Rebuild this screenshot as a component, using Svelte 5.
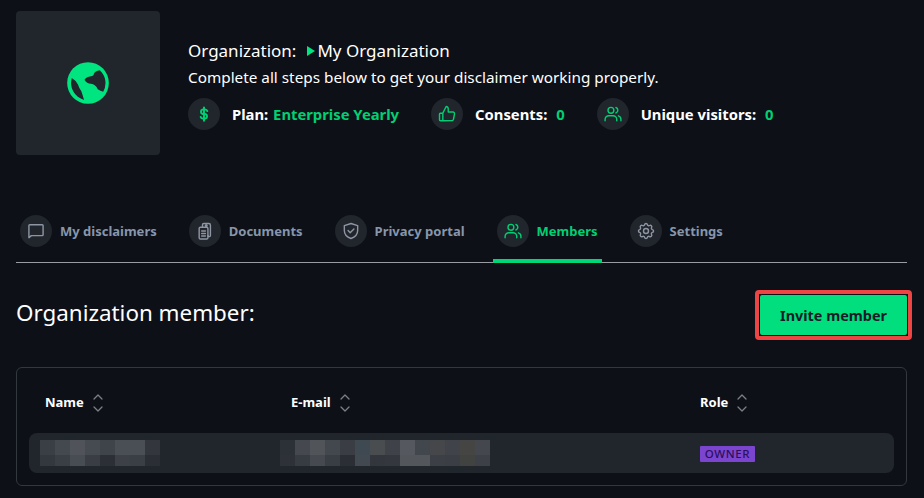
<script>
  const tabs = [
    { label: 'My disclaimers', icon: 'chat' },
    { label: 'Documents', icon: 'docs' },
    { label: 'Privacy portal', icon: 'shield' },
    { label: 'Members', icon: 'people', active: true },
    { label: 'Settings', icon: 'gear' }
  ];
  const nameTop = ['#3a3e45','#44484f','#50535a','#464a51','#3f434a','#4a4e55','#4a4e55','#33363c'];
  const nameBottom = ['#33373e','#3a3e45','#484c53','#3a3d44','#2c2f35','#3d4046','#3a3e45','#2b2e35'];
  const mailTop = ['#2c3037','#45494f','#515458','#43474e','#3a3e44','#3f4952','#4a4d50','#3f4248','#55585f','#42464d','#45474b','#40444a','#454644','#44484e'];
  const mailBottom = ['#2e3238','#373b42','#464a50','#393d44','#2b2e35','#434950','#33373d','#34383e','#53565a','#53565a','#3c4046','#3b3f45','#414341','#3d4147'];
</script>

{#snippet icon(name)}
  <svg class="ico" viewBox="0 0 24 24" fill="none" stroke="currentColor" stroke-width="1.7" stroke-linecap="round" stroke-linejoin="round">
    {#if name === 'chat'}
      <path d="M3.5 20V5.5a1 1 0 0 1 1-1h15a1 1 0 0 1 1 1v11a1 1 0 0 1-1 1H6.5z" />
    {:else if name === 'docs'}
      <rect x="5" y="7.5" width="10.5" height="14" rx="1.5" />
      <path d="M8 12h4.500M8 15h4.500M8 18h4.500" />
      <path d="M9 7.500V4.500a1.500 1.500 0 0 1 1.500-1.500h6a2 2 0 0 1 2 2v12a1.500 1.500 0 0 1-3 .5" />
      <circle cx="13.500" cy="5.500" r="1" />
    {:else if name === 'shield'}
      <path d="M12 3l8 2.500v6c0 5-3.400 8-8 9.500-4.600-1.500-8-4.500-8-9.500v-6z" />
      <path d="M8.500 11.500l2.500 2.500 4.500-4.500" />
    {:else if name === 'people'}
      <circle cx="9.500" cy="7.500" r="3.500" />
      <path d="M2.500 20v-1.500a4.500 4.500 0 0 1 4.500-4.500h5a4.500 4.500 0 0 1 4.500 4.500V20" />
      <path d="M15.500 4.200a3.500 3.500 0 0 1 0 6.600M18.500 14.200a4.500 4.500 0 0 1 3 4.300V20" />
    {:else if name === 'gear'}
      <circle cx="12" cy="12" r="3" />
      <path d="M10.300 4.300c.4-1.800 3-1.800 3.400 0a1.700 1.700 0 0 0 2.600 1.100c1.500-.9 3.300.9 2.400 2.400a1.700 1.700 0 0 0 1 2.500c1.800.4 1.800 3 0 3.400a1.700 1.700 0 0 0-1 2.600c.9 1.500-.9 3.300-2.400 2.400a1.700 1.700 0 0 0-2.600 1c-.4 1.800-3 1.800-3.400 0a1.700 1.700 0 0 0-2.600-1c-1.500.9-3.300-.9-2.400-2.400a1.700 1.700 0 0 0-1-2.600c-1.800-.4-1.800-3 0-3.400a1.700 1.700 0 0 0 1-2.500c-.9-1.500.9-3.300 2.400-2.400a1.700 1.700 0 0 0 2.600-1.100z" />
    {:else if name === 'thumb'}
      <path d="M7 11v9H4a1 1 0 0 1-1-1v-7a1 1 0 0 1 1-1zM7 11l4-8a3 3 0 0 1 2.500 3v3.500h5.500a2 2 0 0 1 2 2.300l-1.200 6.500a2 2 0 0 1-2 1.700H7" />
    {:else if name === 'dollar'}
      <path stroke-width="2.300" d="M16 8.500A3 3 0 0 0 13.300 6.500h-2.600a2.800 2.800 0 0 0 0 5.500h2.600a2.800 2.800 0 0 1 0 5.500h-2.600A3 3 0 0 1 8 15.500M12 4v16" />
    {/if}
  </svg>
{/snippet}

{#snippet sorter()}
  <svg class="sort" viewBox="0 0 12 20" fill="none" stroke="currentColor" stroke-width="1.300" stroke-linecap="round" stroke-linejoin="round">
    <path d="M2 6L6 2l4 4M2 14l4 4 4-4" />
  </svg>
{/snippet}

<main class="page">
  <header class="head">
    <div class="logo">
      <svg class="globe" viewBox="52 50 123 123">
        <circle cx="113.500" cy="111.500" r="61" fill="#00e57f" />
        <path fill="#21252c" d="M148 74 Q134 76 131 84 Q130 92 122 92 Q108 94 103 102 Q110 114 122 114 Q136 116 142 130 Q150 136 158 137 A51 51 0 0 0 148 74Z" />
        <path fill="#21252c" d="M66 97 Q78 104 84 116 Q88 128 94 136 Q98 148 102 161 A51 51 0 0 1 66 97Z" />
      </svg>
    </div>
    <div class="info">
      <div class="org">
        <span>Organization:</span>
        <span class="tri"></span>
        <span>My Organization</span>
      </div>
      <p class="desc">Complete all steps below to get your disclaimer working properly.</p>
      <div class="stats">
        <div class="stat">
          <span class="circle green">{@render icon('dollar')}</span>
          <span class="stat-text">Plan: <b class="plan">Enterprise Yearly</b></span>
        </div>
        <div class="stat">
          <span class="circle green">{@render icon('thumb')}</span>
          <span class="stat-text">Consents: <b class="val">0</b></span>
        </div>
        <div class="stat">
          <span class="circle green">{@render icon('people')}</span>
          <span class="stat-text">Unique visitors: <b class="val">0</b></span>
        </div>
      </div>
    </div>
  </header>

  <nav class="tabs">
    {#each tabs as t}
      <div class="tab" class:active={t.active}>
        <span class="circle">{@render icon(t.icon)}</span>
        <span>{t.label}</span>
      </div>
    {/each}
  </nav>

  <section class="title-row">
    <h1>Organization member:</h1>
    <div class="highlight"><button>Invite member</button></div>
  </section>

  <section class="table">
    <div class="cols heads">
      <div class="th th-name">Name {@render sorter()}</div>
      <div class="th th-mail">E-mail {@render sorter()}</div>
      <div class="th">Role {@render sorter()}</div>
    </div>
    <div class="cols row">
      <div class="blur b-name">
        {#each nameTop as c}<i style:background={c}></i>{/each}
        {#each nameBottom as c}<i style:background={c}></i>{/each}
      </div>
      <div class="blur b-mail">
        {#each mailTop as c}<i style:background={c}></i>{/each}
        {#each mailBottom as c}<i style:background={c}></i>{/each}
      </div>
      <div class="role"><span class="badge">OWNER</span></div>
    </div>
  </section>
</main>

<style>
  :global(body) {
    margin: 0;
    background: #0d1017;
  }
  .page {
    box-sizing: border-box;
    width: 924px;
    height: 498px;
    padding: 11px 17px 0 16px;
    overflow: hidden;
    font-family: "Noto Sans", "Open Sans", sans-serif;
    color: #fff;
  }
  .head {
    display: flex;
    gap: 28px;
  }
  .logo {
    width: 144px;
    height: 144px;
    flex: none;
    display: flex;
    align-items: center;
    justify-content: center;
    background: #21252c;
    border-radius: 4px;
  }
  .globe {
    width: 42px;
    height: 42px;
  }
  .info {
    padding-top: 28px;
  }
  .org {
    display: flex;
    align-items: center;
    font-size: 17px;
    line-height: 24px;
  }
  .tri {
    width: 0;
    height: 0;
    margin: 0 2px 0 11px;
    border-left: 8px solid #00e57f;
    border-top: 5.500px solid transparent;
    border-bottom: 5.500px solid transparent;
  }
  .desc {
    margin: 4px 0 10px;
    font-size: 15.300px;
    line-height: 20px;
  }
  .stats {
    display: flex;
    gap: 32px;
  }
  .stat {
    display: flex;
    align-items: center;
    gap: 12px;
  }
  .stat-text {
    font-size: 14.800px;
    line-height: 34px;
    font-weight: 700;
  }
  .stat-text b {
    color: #00cf73;
    font-weight: 700;
  }
  .plan {
    margin-left: 1px;
  }
  .val {
    margin-left: 5px;
  }
  .circle {
    width: 32px;
    height: 32px;
    flex: none;
    display: flex;
    align-items: center;
    justify-content: center;
    border-radius: 50%;
    background: #21252c;
    color: #8f96a3;
  }
  .circle.green {
    color: #00cf73;
  }
  .ico {
    width: 20px;
    height: 20px;
  }
  .tabs {
    display: flex;
    gap: 24px;
    height: 47px;
    margin-top: 60px;
    border-bottom: 1px solid #9a9ca3;
  }
  .tab {
    display: flex;
    align-items: flex-start;
    gap: 8px;
    height: 48px;
    padding: 0 4px;
    box-sizing: border-box;
    font-size: 13px;
    line-height: 32px;
    font-weight: 700;
    color: #8796ab;
    border-bottom: 4px solid transparent;
  }
  .tab.active {
    color: #00cf73;
    border-bottom-color: #00d577;
  }
  .tab.active .circle {
    color: #00cf73;
  }
  .title-row {
    display: flex;
    justify-content: space-between;
    margin-top: 27px;
    margin-right: -5px;
  }
  h1 {
    margin: 0;
    font-size: 22.400px;
    font-weight: 400;
    line-height: 45px;
  }
  .highlight {
    border: 4px solid #ef4444;
    border-radius: 4px;
  }
  button {
    display: block;
    width: 149px;
    height: 42px;
    padding: 0;
    border: 1px solid #0d1017;
    border-radius: 3px;
    background: #00de7d;
    color: #161c28;
    font: 700 14.400px "Noto Sans", "Open Sans", sans-serif;
  }
  .table {
    box-sizing: border-box;
    height: 119px;
    margin-top: 27px;
    padding: 0 12px;
    border: 1px solid #33373e;
    border-radius: 6px;
  }
  .cols {
    display: grid;
    grid-template-columns: 240px 420px 1fr;
    align-items: center;
  }
  .heads {
    box-sizing: border-box;
    height: 65px;
    padding: 3px 0 0 11px;
  }
  .th {
    display: flex;
    align-items: center;
    gap: 8px;
    font-size: 13px;
    font-weight: 700;
  }
  .th-name {
    padding-left: 5px;
  }
  .th-mail {
    padding-left: 11px;
  }
  .sort {
    width: 12px;
    height: 20px;
    margin-top: 1px;
    color: #7c7f86;
  }
  .row {
    height: 40px;
    padding-left: 11px;
    box-sizing: border-box;
    background: #21252c;
    border-radius: 8px;
  }
  .blur {
    display: grid;
    grid-template-rows: 15px 11px;
  }
  .b-name {
    width: 120px;
    grid-template-columns: repeat(8, 15px);
  }
  .b-mail {
    width: 210px;
    grid-template-columns: repeat(14, 15px);
  }
  .role {
    display: flex;
    padding-top: 1px;
  }
  .badge {
    width: 55px;
    text-align: center;
    background: #7b45d0;
    color: #2c0f5c;
    font-size: 11.500px;
    font-weight: 500;
    line-height: 16px;
    letter-spacing: .6px;
    border-radius: 1px;
  }
</style>
